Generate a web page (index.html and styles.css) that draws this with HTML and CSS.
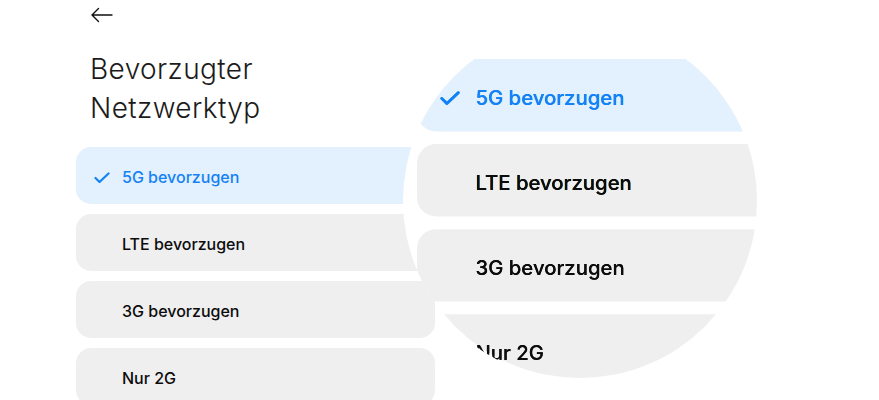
FILE: index.html
```html
<!DOCTYPE html>
<html lang="de">
<head>
<meta charset="utf-8">
<title>Bevorzugter Netzwerktyp</title>
<link rel="stylesheet" href="styles.css">
</head>
<body>
<div class="page">
  <header class="topbar">
    <svg class="back" width="24" height="16" viewBox="0 0 24 16" fill="none" stroke="#111" stroke-width="1.4" stroke-linecap="round" stroke-linejoin="round"><path d="M2 8H22M8.5 1.5L2 8L8.5 14.5"/></svg>
  </header>
  <h1 class="title">Bevorzugter<br>Netzwerktyp</h1>
  <ul class="list">
    <li class="row selected"><svg class="check" width="16" height="12" viewBox="0 0 16 12" fill="none" stroke="#1482f5" stroke-width="2.2" stroke-linecap="round" stroke-linejoin="round"><path d="M1.5 6L5.5 10L14.5 1.5"/></svg><span>5G bevorzugen</span></li>
    <li class="row"><span>LTE bevorzugen</span></li>
    <li class="row"><span>3G bevorzugen</span></li>
    <li class="row"><span>Nur 2G</span></li>
  </ul>

  <div class="lens lens-bg">
    <ul class="list lens-list">
      <li class="row selected"><svg class="check" width="16" height="12" viewBox="0 0 16 12" fill="none" stroke="#1482f5" stroke-width="2.2" stroke-linecap="round" stroke-linejoin="round"><path d="M1.5 6L5.5 10L14.5 1.5"/></svg><span>5G bevorzugen</span></li>
      <li class="row"><span>LTE bevorzugen</span></li>
      <li class="row"><span>3G bevorzugen</span></li>
      <li class="row"><span>Nur 2G</span></li>
    </ul>
  </div>
  <div class="lens lens-text" aria-hidden="true">
    <ul class="list lens-list">
      <li class="row selected"><svg class="check" width="16" height="12" viewBox="0 0 16 12" fill="none" stroke="#1482f5" stroke-width="2.2" stroke-linecap="round" stroke-linejoin="round"><path d="M1.5 6L5.5 10L14.5 1.5"/></svg><span>5G bevorzugen</span></li>
      <li class="row"><span>LTE bevorzugen</span></li>
      <li class="row"><span>3G bevorzugen</span></li>
      <li class="row"><span>Nur 2G</span></li>
    </ul>
  </div>
</div>
</body>
</html>
```
FILE: styles.css
```css
html, body {
  margin: 0;
  padding: 0;
  background: #ffffff;
}
body {
  font-family: Inter, Roboto, "Noto Sans", "Liberation Sans", sans-serif;
  color: #111;
  overflow: hidden;
}
.page {
  position: relative;
  width: 879px;
  height: 400px;
  padding-left: 76px;
  box-sizing: border-box;
}
.topbar {
  height: 29px;
  display: flex;
  align-items: center;
  padding-left: 14px;
}
.back {
  display: block;
  margin-top: 1px;
}
.title {
  margin: 21px 0 0 14px;
  font-size: 28px;
  line-height: 39px;
  font-weight: 300;
  color: #1b1b1b;
  letter-spacing: 0.4px;
}
.list {
  list-style: none;
  margin: 19px 0 0 0;
  padding: 0;
  width: 359px;
  display: flex;
  flex-direction: column;
  gap: 10px;
}
.row {
  height: 57px;
  border-radius: 15px;
  background: #efefef;
  display: flex;
  align-items: center;
  padding-left: 46px;
  font-size: 16px;
  font-weight: 500;
  color: #0c0c0c;
  position: relative;
}
.row span {
  padding-top: 2px;
}
.row.selected {
  background: #e3f0fd;
  color: #1482f5;
}
.check {
  position: absolute;
  left: 18px;
  top: 25px;
}
.lens {
  position: absolute;
  left: 403px;
  top: 24px;
  width: 354px;
  height: 354px;
  overflow: hidden;
}
.lens-bg {
  background: #ffffff;
  clip-path: circle(177px at 177px 177px);
}
.lens-text {
  clip-path: circle(179px at 177px 177px);
  overflow: visible;
}
.lens-text .row,
.lens-text .row.selected {
  background: transparent;
}
.lens-list {
  position: absolute;
  left: 14px;
  top: 35px;
  margin: 0;
  transform: scale(1.27);
  transform-origin: 0 0;
}
```
